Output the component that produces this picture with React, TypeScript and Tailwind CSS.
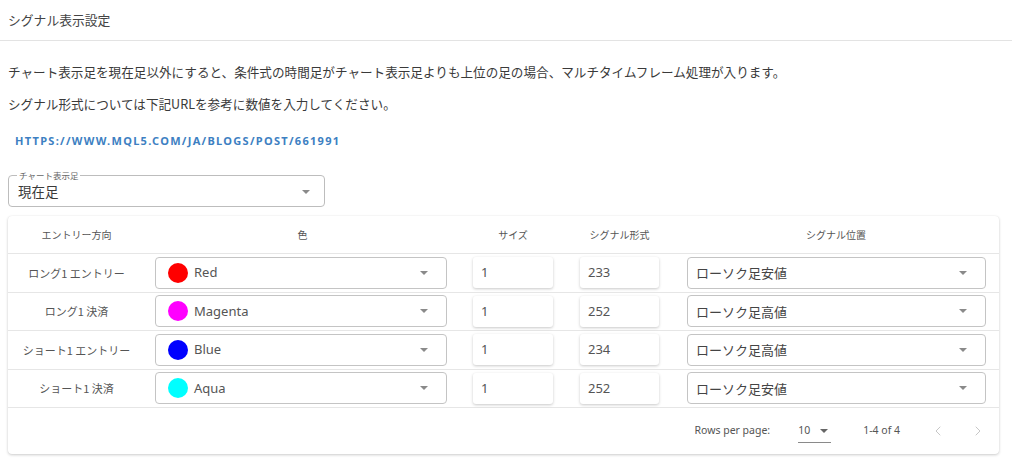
import { ChevronLeft, ChevronRight } from 'lucide-react';

const JP = "font-['Noto_Sans_CJK_JP',sans-serif]";
const LATIN = "font-['Noto_Sans','Noto_Sans_CJK_JP',sans-serif]";

interface SignalRow {
  label: string;
  color: string;
  colorName: string;
  size: string;
  code: string;
  position: string;
}

const rows: SignalRow[] = [
  { label: 'ロング1 エントリー', color: '#ff0000', colorName: 'Red', size: '1', code: '233', position: 'ローソク足安値' },
  { label: 'ロング1 決済', color: '#ff00ff', colorName: 'Magenta', size: '1', code: '252', position: 'ローソク足高値' },
  { label: 'ショート1 エントリー', color: '#0000ff', colorName: 'Blue', size: '1', code: '234', position: 'ローソク足高値' },
  { label: 'ショート1 決済', color: '#00ffff', colorName: 'Aqua', size: '1', code: '252', position: 'ローソク足安値' },
];

const Caret = () => (
  <svg width="8" height="4" viewBox="0 0 10 5" className="shrink-0">
    <path d="M0 0 L10 0 L5 5 Z" fill="#8a8a8a" />
  </svg>
);

const gridCols = 'grid grid-cols-[137px_315px_106px_107px_1fr]';

const SelectBox = ({ children }: { children: React.ReactNode }) => (
  <div className="flex h-[32px] w-full items-center rounded-[4px] border border-[#c4c4c4] bg-white pl-[12px] pr-[18px]">
    <div className="flex flex-1 items-center gap-[6px]">{children}</div>
    <Caret />
  </div>
);

const NumberBox = ({ value }: { value: string }) => (
  <div
    className={`flex h-[31px] w-full items-center rounded-[3px] bg-white pl-[8px] text-[13px] text-[#555] shadow-[0_1px_3px_rgba(0,0,0,0.22)] ${LATIN}`}
  >
    {value}
  </div>
);

export default function App() {
  return (
    <div className={`min-h-[471px] w-[1024px] bg-white text-[#444] ${JP}`}>
      <div className="mr-[12px] flex h-[41px] items-center border-b border-[#e3e3e3] pl-[8px] text-[12.8px] text-[#444]">
        シグナル表示設定
      </div>

      <div className="pl-[8px] pr-[25px]">
        <p className="mt-[21px] text-[12.6px] leading-[20px] text-[#3a3a3a]">
          チャート表示足を現在足以外にすると、条件式の時間足がチャート表示足よりも上位の足の場合、マルチタイムフレーム処理が入ります。
        </p>
        <p className="mt-[12px] text-[12.6px] leading-[20px] text-[#3a3a3a]">
          シグナル形式については下記URLを参考に数値を入力してください。
        </p>
        <div className="mt-[20px] pl-[7px] font-['Noto_Sans',sans-serif] text-[11px] font-bold uppercase leading-[14px] tracking-[1.3px] text-[#3d80c2]">
          https://www.mql5.com/ja/blogs/post/661991
        </div>

        <fieldset className="mt-[23px] flex h-[36px] w-[317px] items-center rounded-[4px] border border-[#bdbdbd] pl-[9px] pr-[14px] pb-[3px]">
          <legend className="ml-[-1px] px-[2px] text-[8.5px] leading-[9px] text-[#666]">チャート表示足</legend>
          <span className="flex-1 text-[13.5px] text-[#3a3a3a]">現在足</span>
          <Caret />
        </fieldset>

        <div className="mt-[9px] overflow-hidden rounded-[4px] bg-white shadow-[0_1px_3px_rgba(0,0,0,0.2),0_0_1px_rgba(0,0,0,0.08)]">
          <div className={`${gridCols} h-[38px] items-center border-b border-[#e6e6e6] text-center text-[10px] text-[#555]`}>
            <div>エントリー方向</div>
            <div>色</div>
            <div>サイズ</div>
            <div>シグナル形式</div>
            <div>シグナル位置</div>
          </div>

          {rows.map((row) => (
            <div
              key={row.label}
              className={`${gridCols} h-[38.5px] items-center border-b border-[#e6e6e6]`}
            >
              <div className="text-center text-[11px] text-[#555]">{row.label}</div>
              <div className="pl-[10px] pr-[13px]">
                <SelectBox>
                  <span className="h-[20px] w-[20px] rounded-full" style={{ backgroundColor: row.color }} />
                  <span className={`text-[13px] text-[#555] ${LATIN}`}>{row.colorName}</span>
                </SelectBox>
              </div>
              <div className="px-[13px]">
                <NumberBox value={row.size} />
              </div>
              <div className="pl-[14px] pr-[14px]">
                <NumberBox value={row.code} />
              </div>
              <div className="pl-[14px] pr-[13px]">
                <SelectBox>
                  <span className="ml-[-4px] text-[13px] text-[#444]">{row.position}</span>
                </SelectBox>
              </div>
            </div>
          ))}

          <div className={`flex h-[46px] items-center justify-end pr-[13px] text-[10.5px] text-[#555] ${LATIN}`}>
            <span>Rows per page:</span>
            <div className="ml-[28px] flex h-[24px] w-[33px] items-center justify-between border-b border-[#8a8a8a] pt-[1px]">
              <span>10</span>
              <span className="mr-[3px]">
                <svg width="8" height="4" viewBox="0 0 10 5">
                  <path d="M0 0 L10 0 L5 5 Z" fill="#666" />
                </svg>
              </span>
            </div>
            <span className="ml-[32px]">1-4 of 4</span>
            <ChevronLeft className="ml-[30px] text-[#c7c7c7]" size={16} strokeWidth={1.5} />
            <ChevronRight className="ml-[24px] text-[#c7c7c7]" size={16} strokeWidth={1.5} />
          </div>
        </div>
      </div>
    </div>
  );
}
